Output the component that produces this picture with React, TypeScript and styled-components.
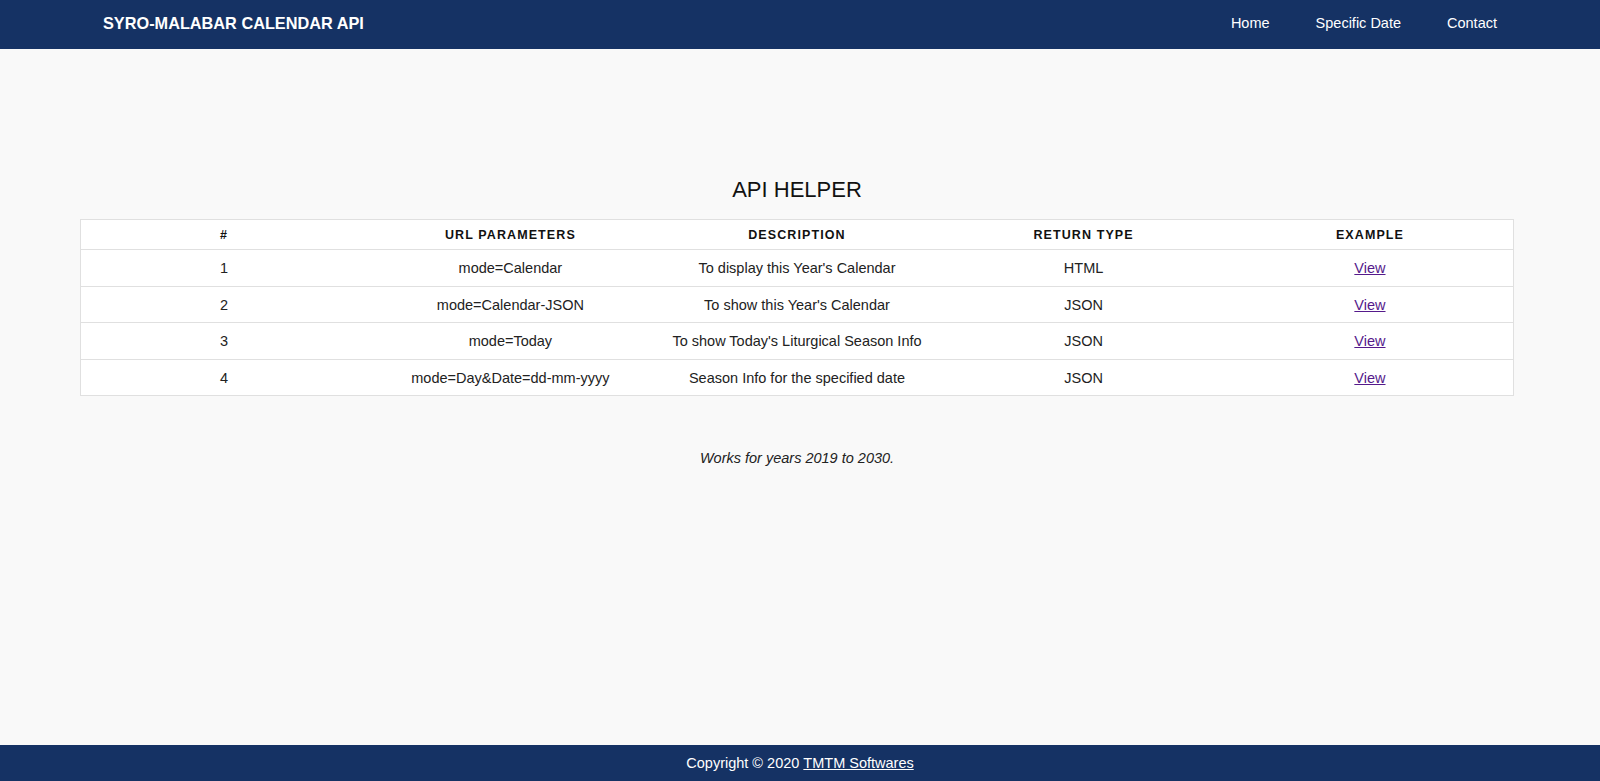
import React from "react";
import styled, { createGlobalStyle } from "styled-components";

const GlobalStyle = createGlobalStyle`
  html, body {
    margin: 0;
    padding: 0;
  }
  body {
    background: #f9f9f9;
    font-family: "Liberation Sans", Arial, sans-serif;
    color: #222;
  }
`;

const Page = styled.div`
  min-height: 100vh;
  display: flex;
  flex-direction: column;
`;

const NavBar = styled.header`
  height: 49px;
  background: #153264;
  display: flex;
  align-items: center;
  justify-content: space-between;
  padding: 0 80px;
  box-sizing: border-box;
`;

const Brand = styled.a`
  color: #fff;
  font-weight: bold;
  font-size: 16.3px;
  padding: 0 23px 2px;
  text-decoration: none;
`;

const NavLinks = styled.nav`
  display: flex;
  align-items: center;
`;

const NavLink = styled.a`
  color: #fff;
  font-size: 14.5px;
  padding: 0 23px 3px;
  text-decoration: none;
`;

const Main = styled.main`
  flex: 1;
  padding: 128px 86px 0 80px;
`;

const Title = styled.h1`
  margin: 0 0 16px;
  font-size: 22px;
  font-weight: normal;
  line-height: 26px;
  text-align: center;
  color: #111;
`;

const Table = styled.table`
  width: 100%;
  border-collapse: collapse;
  background: #fff;
  border: 1px solid #e0e0e0;
  table-layout: fixed;
`;

const HeadCell = styled.th`
  border-bottom: 1px solid #e0e0e0;
  padding: 8px 8px 6px;
  line-height: 15px;
  font-size: 12.5px;
  font-weight: bold;
  letter-spacing: 1.1px;
  text-transform: uppercase;
  text-align: center;
  color: #111;
`;

const Cell = styled.td`
  border-top: 1px solid #e0e0e0;
  padding: 11px 8px 9px;
  line-height: 15.5px;
  font-size: 14.5px;
  text-align: center;
  color: #222;
`;

const ViewLink = styled.a`
  color: #551a8b;
  text-decoration: underline;
`;

const Note = styled.p`
  margin: 54px 0 0;
  font-size: 14.5px;
  font-style: italic;
  text-align: center;
  line-height: 17px;
  color: #222;
`;

const Footer = styled.footer`
  height: 36px;
  background: #153264;
  color: #fff;
  font-size: 14.5px;
  display: flex;
  align-items: center;
  justify-content: center;
  gap: 4px;
`;

const FooterLink = styled.a`
  color: #fff;
  text-decoration: underline;
`;

type Endpoint = {
  params: string;
  description: string;
  returns: string;
};

const endpoints: Endpoint[] = [
  { params: "mode=Calendar", description: "To display this Year's Calendar", returns: "HTML" },
  { params: "mode=Calendar-JSON", description: "To show this Year's Calendar", returns: "JSON" },
  { params: "mode=Today", description: "To show Today's Liturgical Season Info", returns: "JSON" },
  { params: "mode=Day&Date=dd-mm-yyyy", description: "Season Info for the specified date", returns: "JSON" },
];

const columns = ["#", "URL Parameters", "Description", "Return Type", "Example"];

export default function App() {
  return (
    <Page>
      <GlobalStyle />
      <NavBar>
        <Brand href="#">SYRO-MALABAR CALENDAR API</Brand>
        <NavLinks>
          <NavLink href="#">Home</NavLink>
          <NavLink href="#">Specific Date</NavLink>
          <NavLink href="#">Contact</NavLink>
        </NavLinks>
      </NavBar>
      <Main>
        <Title>API HELPER</Title>
        <Table>
          <thead>
            <tr>
              {columns.map((c) => (
                <HeadCell key={c}>{c}</HeadCell>
              ))}
            </tr>
          </thead>
          <tbody>
            {endpoints.map((e, i) => (
              <tr key={e.params}>
                <Cell>{i + 1}</Cell>
                <Cell>{e.params}</Cell>
                <Cell>{e.description}</Cell>
                <Cell>{e.returns}</Cell>
                <Cell>
                  <ViewLink href="#">View</ViewLink>
                </Cell>
              </tr>
            ))}
          </tbody>
        </Table>
        <Note>Works for years 2019 to 2030.</Note>
      </Main>
      <Footer>
        Copyright © 2020 <FooterLink href="#">TMTM Softwares</FooterLink>
      </Footer>
    </Page>
  );
}
